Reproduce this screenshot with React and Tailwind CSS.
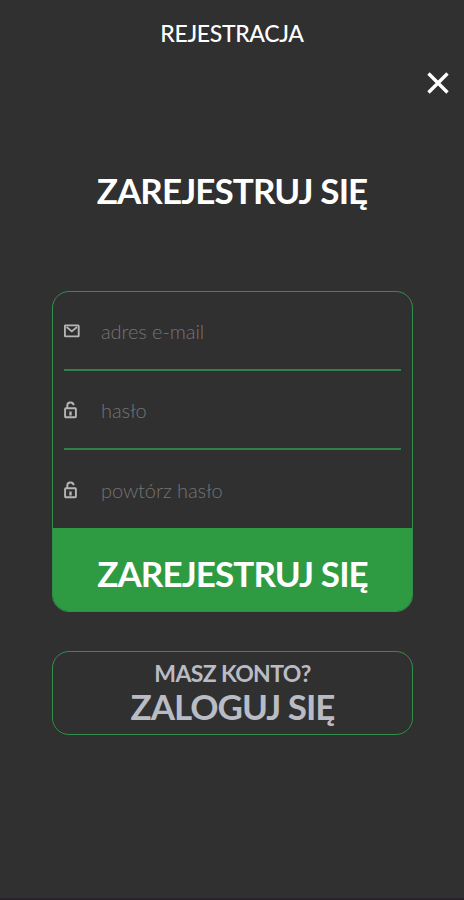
import { useState } from "react";

const fields = [
    { name: "email", type: "email", placeholder: "adres e-mail", icon: MailIcon },
    { name: "password", type: "password", placeholder: "hasło", icon: LockIcon },
    { name: "repeat", type: "password", placeholder: "powtórz hasło", icon: LockIcon },
];

function MailIcon() {
    return (
        <svg width="16" height="14" viewBox="0 0 16 14" fill="none" stroke="#b4b6b5" className="block">
            <rect x="0.9" y="1.4" width="13.8" height="11" rx="0.6" strokeWidth="1.9" />
            <path d="M2.6 3L7.8 7.4L13 3" strokeWidth="1.8" />
        </svg>
    );
}

function LockIcon() {
    return (
        <svg width="14" height="18" viewBox="0 0 14 18" fill="none" stroke="#b4b6b5" className="block">
            <rect x="1.1" y="7.2" width="10.8" height="9" rx="0.8" strokeWidth="1.9" />
            <path d="M3.3 7.2V4.6C3.3 0.6 9.4 0.4 9.6 4.2" strokeWidth="1.9" />
            <path d="M6.5 10.4V14.6" strokeWidth="2.4" />
        </svg>
    );
}

function CloseIcon() {
    return (
        <svg width="22" height="22" viewBox="0 0 22 22" stroke="#fff" strokeWidth="3.4" className="block">
            <path d="M1.5 1.5L20.5 20.5M20.5 1.5L1.5 20.5" />
        </svg>
    );
}

export default function App() {
    const [values, setValues] = useState({ email: "", password: "", repeat: "" });

    const handleChange = (e) => {
        setValues({ ...values, [e.target.name]: e.target.value });
    };

    return (
        <div className="flex h-[900px] w-[464px] flex-col overflow-hidden border-b-2 border-[#2b2229] bg-[#303030] font-['Lato',sans-serif] text-white">
            <header className="flex h-[72px] shrink-0 flex-col items-center pt-[17px]">
                <p className="text-[23px] leading-8 font-medium tracking-[-0.35px] whitespace-nowrap">REJESTRACJA</p>
            </header>
            <div className="flex h-[22px] shrink-0 justify-end pr-[15px]">
                <button type="button" aria-label="Zamknij">
                    <CloseIcon />
                </button>
            </div>

            <h1 className="mt-[76px] h-10 shrink-0 text-center text-[35px] leading-10 font-bold tracking-[-0.9px] whitespace-nowrap">
                ZAREJESTRUJ SIĘ
            </h1>

            <form
                onSubmit={(e) => e.preventDefault()}
                className="mt-[81px] ml-[52px] flex h-[321px] w-[361px] shrink-0 flex-col overflow-hidden rounded-[17px] border border-[#2f8f4a]"
            >
                <div className="flex h-[236px] flex-col px-[11px]">
                    {fields.map(({ name, type, placeholder, icon: Icon }, i) => (
                        <label
                            key={name}
                            className={`flex h-[79px] shrink-0 items-center ${i < 2 ? "border-b-2 border-[#2f8247]" : ""}`}
                        >
                            <span className="w-[37px] shrink-0 pt-px">
                                <Icon />
                            </span>
                            <input
                                type={type}
                                name={name}
                                value={values[name]}
                                onChange={handleChange}
                                placeholder={placeholder}
                                className="w-full bg-transparent pt-px text-[20px] font-light tracking-[-0.08px] outline-none placeholder:text-[#747474]"
                            />
                        </label>
                    ))}
                </div>
                <button type="submit" className="flex-1 bg-[#2e9b43] pt-1.5 text-[35px] leading-10 font-bold tracking-[-0.9px] whitespace-nowrap">
                    ZAREJESTRUJ SIĘ
                </button>
            </form>

            <button
                type="button"
                className="mt-[39px] ml-[52px] flex h-[84px] w-[361px] shrink-0 flex-col items-center justify-center rounded-[17px] border border-[#2f8f4a] pb-[5px] font-bold whitespace-nowrap text-[#b9bcc4]"
            >
                <span className="text-[23px] leading-8 tracking-[-0.65px]">MASZ KONTO?</span>
                <span className="text-[35px] leading-[35px] tracking-[-1px]">ZALOGUJ SIĘ</span>
            </button>
        </div>
    );
}
